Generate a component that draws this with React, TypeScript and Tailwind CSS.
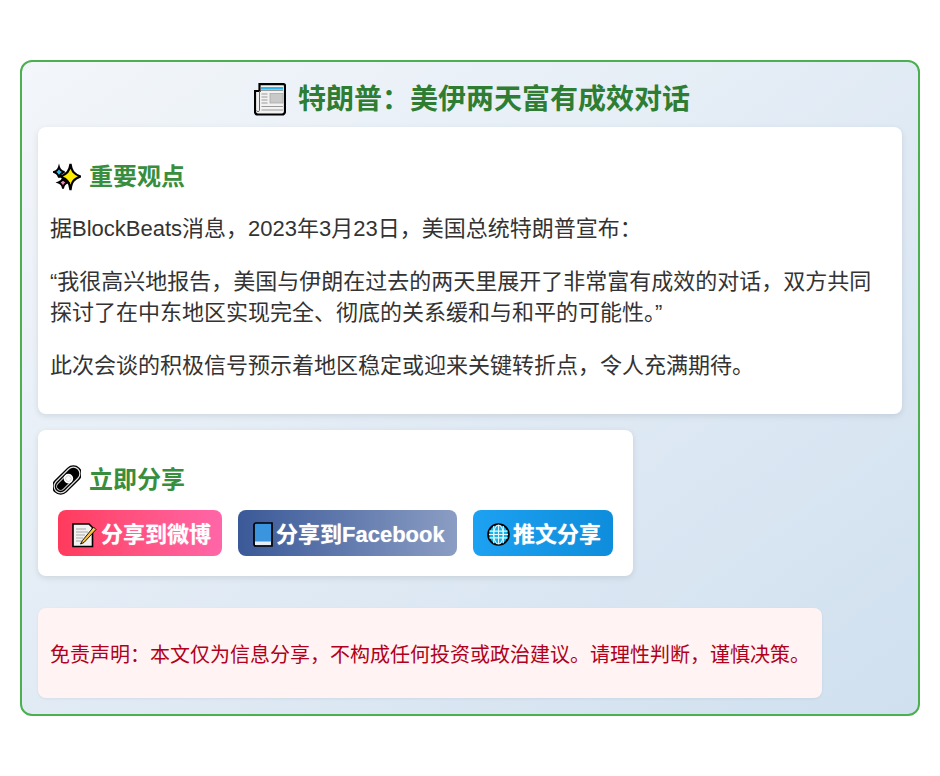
const Newspaper = () => (
  <svg width="32" height="33" viewBox="0 0 32 33" className="shrink-0">
    <path d="M5.5 1.2 H29.5 a1.5 1.5 0 0 1 1.5 1.5 V28.5 a3 3 0 0 1 -3 3 H4 a3 3 0 0 1 -3 -3 V8 H5.5 Z" fill="#f2f2f2" stroke="#000" strokeWidth="2.2" />
    <path d="M5.5 8 V27.5 a1.6 1.6 0 0 1 -3 0" fill="none" stroke="#666" strokeWidth="1" />
    <rect x="7" y="4" width="22" height="2.6" fill="#2bb5e8" />
    <rect x="7" y="7" width="22" height="1" fill="#9a9a9a" />
    <rect x="16" y="10.5" width="13" height="9.5" fill="#c9c9c9" stroke="#aaa" strokeWidth="0.8" />
    <path d="M7.5 11h6M7.5 14h6M7.5 17h6M7.5 20h6M7.5 23.5h21.5M7.5 27h21.5" stroke="#999" strokeWidth="1.1" />
  </svg>
);
const Sparkles = () => (
  <svg width="28" height="28" viewBox="0 0 28 28" className="shrink-0">
    <path d="M17.5 1 C18.5 8 20.5 11 27.5 13.5 C20.5 16 18.5 19 17.5 27 C16.5 19 14 16 7.5 13.5 C14 11 16.5 8 17.5 1Z" fill="#ffec00" stroke="#000" strokeWidth="2.2" />
    <path d="M6 4 C6.8 6.8 8.2 8.2 11.5 9 C8.2 9.8 6.8 11.2 6 14.5 C5.2 11.2 3.8 9.8 0.8 9 C3.8 8.2 5.2 6.8 6 4Z" fill="#35bdf0" stroke="#000" strokeWidth="1.9" />
    <path d="M10 15 C10.6 17.5 11.8 18.6 14.5 19.5 C11.8 20.4 10.6 21.5 10 25.5 C9.4 21.5 8.2 20.4 5.5 19.5 C8.2 18.6 9.4 17.5 10 15Z" fill="#f08ac0" stroke="#000" strokeWidth="1.9" />
  </svg>
);
const Link = () => (
  <svg width="28" height="30" viewBox="0 0 28 30" className="shrink-0">
    <g transform="rotate(-45 14 15)">
      <rect x="-3.5" y="6.5" width="35" height="17" rx="8.5" fill="#000" />
      <rect x="-1.5" y="8.5" width="31" height="13" rx="6.5" fill="none" stroke="#e2e2e2" strokeWidth="1.2" />
      <rect x="1" y="11" width="17" height="8" rx="4" fill="none" stroke="#d0d0d0" strokeWidth="1" />
      <circle cx="16" cy="15" r="4.8" fill="#fff" />
      <circle cx="16" cy="15" r="2.8" fill="#fff" stroke="#bbb" strokeWidth="0.6" />
    </g>
  </svg>
);
const Memo = () => (
  <svg width="25" height="26" viewBox="0 0 25 26" className="shrink-0">
    <path d="M1 2 H17 L20.5 5.5 V24.5 H1 Z" fill="#f2f2f2" stroke="#000" strokeWidth="1.6" />
    <path d="M4 7h10M4 10h12M4 13h9M4 16h7M4 19h6" stroke="#a8a8a8" strokeWidth="1.2" />
    <path d="M21.5 5 L10.5 18.5 L8.5 22 L12 20.5 L24 7.5 Z" fill="#f8c23a" stroke="#000" strokeWidth="0.9" />
  </svg>
);
const Book = () => (
  <svg width="20" height="25" viewBox="0 0 20 25" className="shrink-0">
    <path d="M3 1 H19 V24 H3 a2 2 0 0 1 -2 -2 V3 a2 2 0 0 1 2 -2Z" fill="#3a94de" stroke="#000" strokeWidth="1.7" />
    <rect x="2" y="19.5" width="16" height="3.5" fill="#e8eef5" />
  </svg>
);
const Globe = () => (
  <svg width="23" height="23" viewBox="0 0 24 24" className="shrink-0">
    <circle cx="12" cy="12" r="10.8" fill="#11b4ea" stroke="#000" strokeWidth="2" />
    <g fill="none" stroke="#e4f6fd" strokeWidth="1.1">
      <ellipse cx="12" cy="12" rx="5" ry="10" />
      <path d="M12 2V22M2.5 8.5H21.5M2 12H22M2.5 15.5H21.5M7 3 V21M17 3V21" />
    </g>
  </svg>
);

export default function App() {
  const sans = "font-['Liberation_Sans','Noto_Sans_CJK_SC',sans-serif]";
  return (
    <div className={`bg-white px-5 pt-[60px] pb-[60px] ${sans}`}>
      <div className="rounded-xl border-2 border-[#4caf50] bg-gradient-to-br from-[#f3f6fa] to-[#d0e0ef] h-[656px] px-4 pt-[12px] pb-4 flex flex-col items-start">
        <h1 className="w-full flex items-center justify-center gap-[12px] pl-1 h-[50px] text-[28px] font-bold text-[#2e7d32] mb-[3px] leading-none">
          <Newspaper />
          <span className="pt-[2px]">特朗普：美伊两天富有成效对话</span>
        </h1>
        <section className="w-full bg-white rounded-lg shadow-[0_2px_6px_rgba(0,0,0,0.1)] px-3 h-[287px] pt-[34px]">
          <h2 className="flex items-center gap-[8px] pl-[3px] text-[24px] font-bold text-[#388e3c] leading-[32px]">
            <Sparkles />
            <span>重要观点</span>
          </h2>
          <div className="text-[22px] leading-[31px] text-[#333] mt-[20px] flex flex-col gap-[22px]">
            <p>据BlockBeats消息，2023年3月23日，美国总统特朗普宣布：</p>
            <p>“我很高兴地报告，美国与伊朗在过去的两天里展开了非常富有成效的对话，双方共同探讨了在中东地区实现完全、彻底的关系缓和与和平的可能性。”</p>
            <p>此次会谈的积极信号预示着地区稳定或迎来关键转折点，令人充满期待。</p>
          </div>
        </section>
        <section className="mt-4 w-[595px] h-[146px] bg-white rounded-lg shadow-[0_2px_6px_rgba(0,0,0,0.1)] px-3 pt-[34px]">
          <h2 className="flex items-center gap-[8px] pl-[3px] text-[24px] font-bold text-[#388e3c] leading-[32px]">
            <Link />
            <span>立即分享</span>
          </h2>
          <div className="flex gap-4 mt-[14px] ml-2 text-[22px] font-bold text-white leading-none">
            <a className="flex items-center gap-[4px] h-[46px] w-[164px] pl-[14px] pt-[3px] rounded-lg bg-gradient-to-r from-[#ff3a5c] to-[#ff66a8] [text-shadow:0_0_1px_rgba(255,255,255,0.6)]"><Memo /><span>分享到微博</span></a>
            <a className="flex items-center gap-[3px] h-[46px] w-[219px] pl-[15px] pt-[3px] rounded-lg bg-gradient-to-r from-[#3b5998] to-[#8b9dc3] [text-shadow:0_0_1px_rgba(255,255,255,0.6)]"><Book /><span>分享到Facebook</span></a>
            <a className="flex items-center gap-[3px] h-[46px] w-[140px] pl-[14px] pt-[3px] rounded-lg bg-gradient-to-r from-[#1da1f2] to-[#0d8ddb] [text-shadow:0_0_1px_rgba(255,255,255,0.6)]"><Globe /><span>推文分享</span></a>
          </div>
        </section>
        <section className="mt-8 w-[784px] h-[90px] bg-[#fff3f3] rounded-lg shadow-[0_1px_3px_rgba(0,0,0,0.06)] px-3 pt-[3px] flex items-center text-[20px] text-[#b00020] whitespace-nowrap">
          <p>免责声明：本文仅为信息分享，不构成任何投资或政治建议。请理性判断，谨慎决策。</p>
        </section>
      </div>
    </div>
  );
}
